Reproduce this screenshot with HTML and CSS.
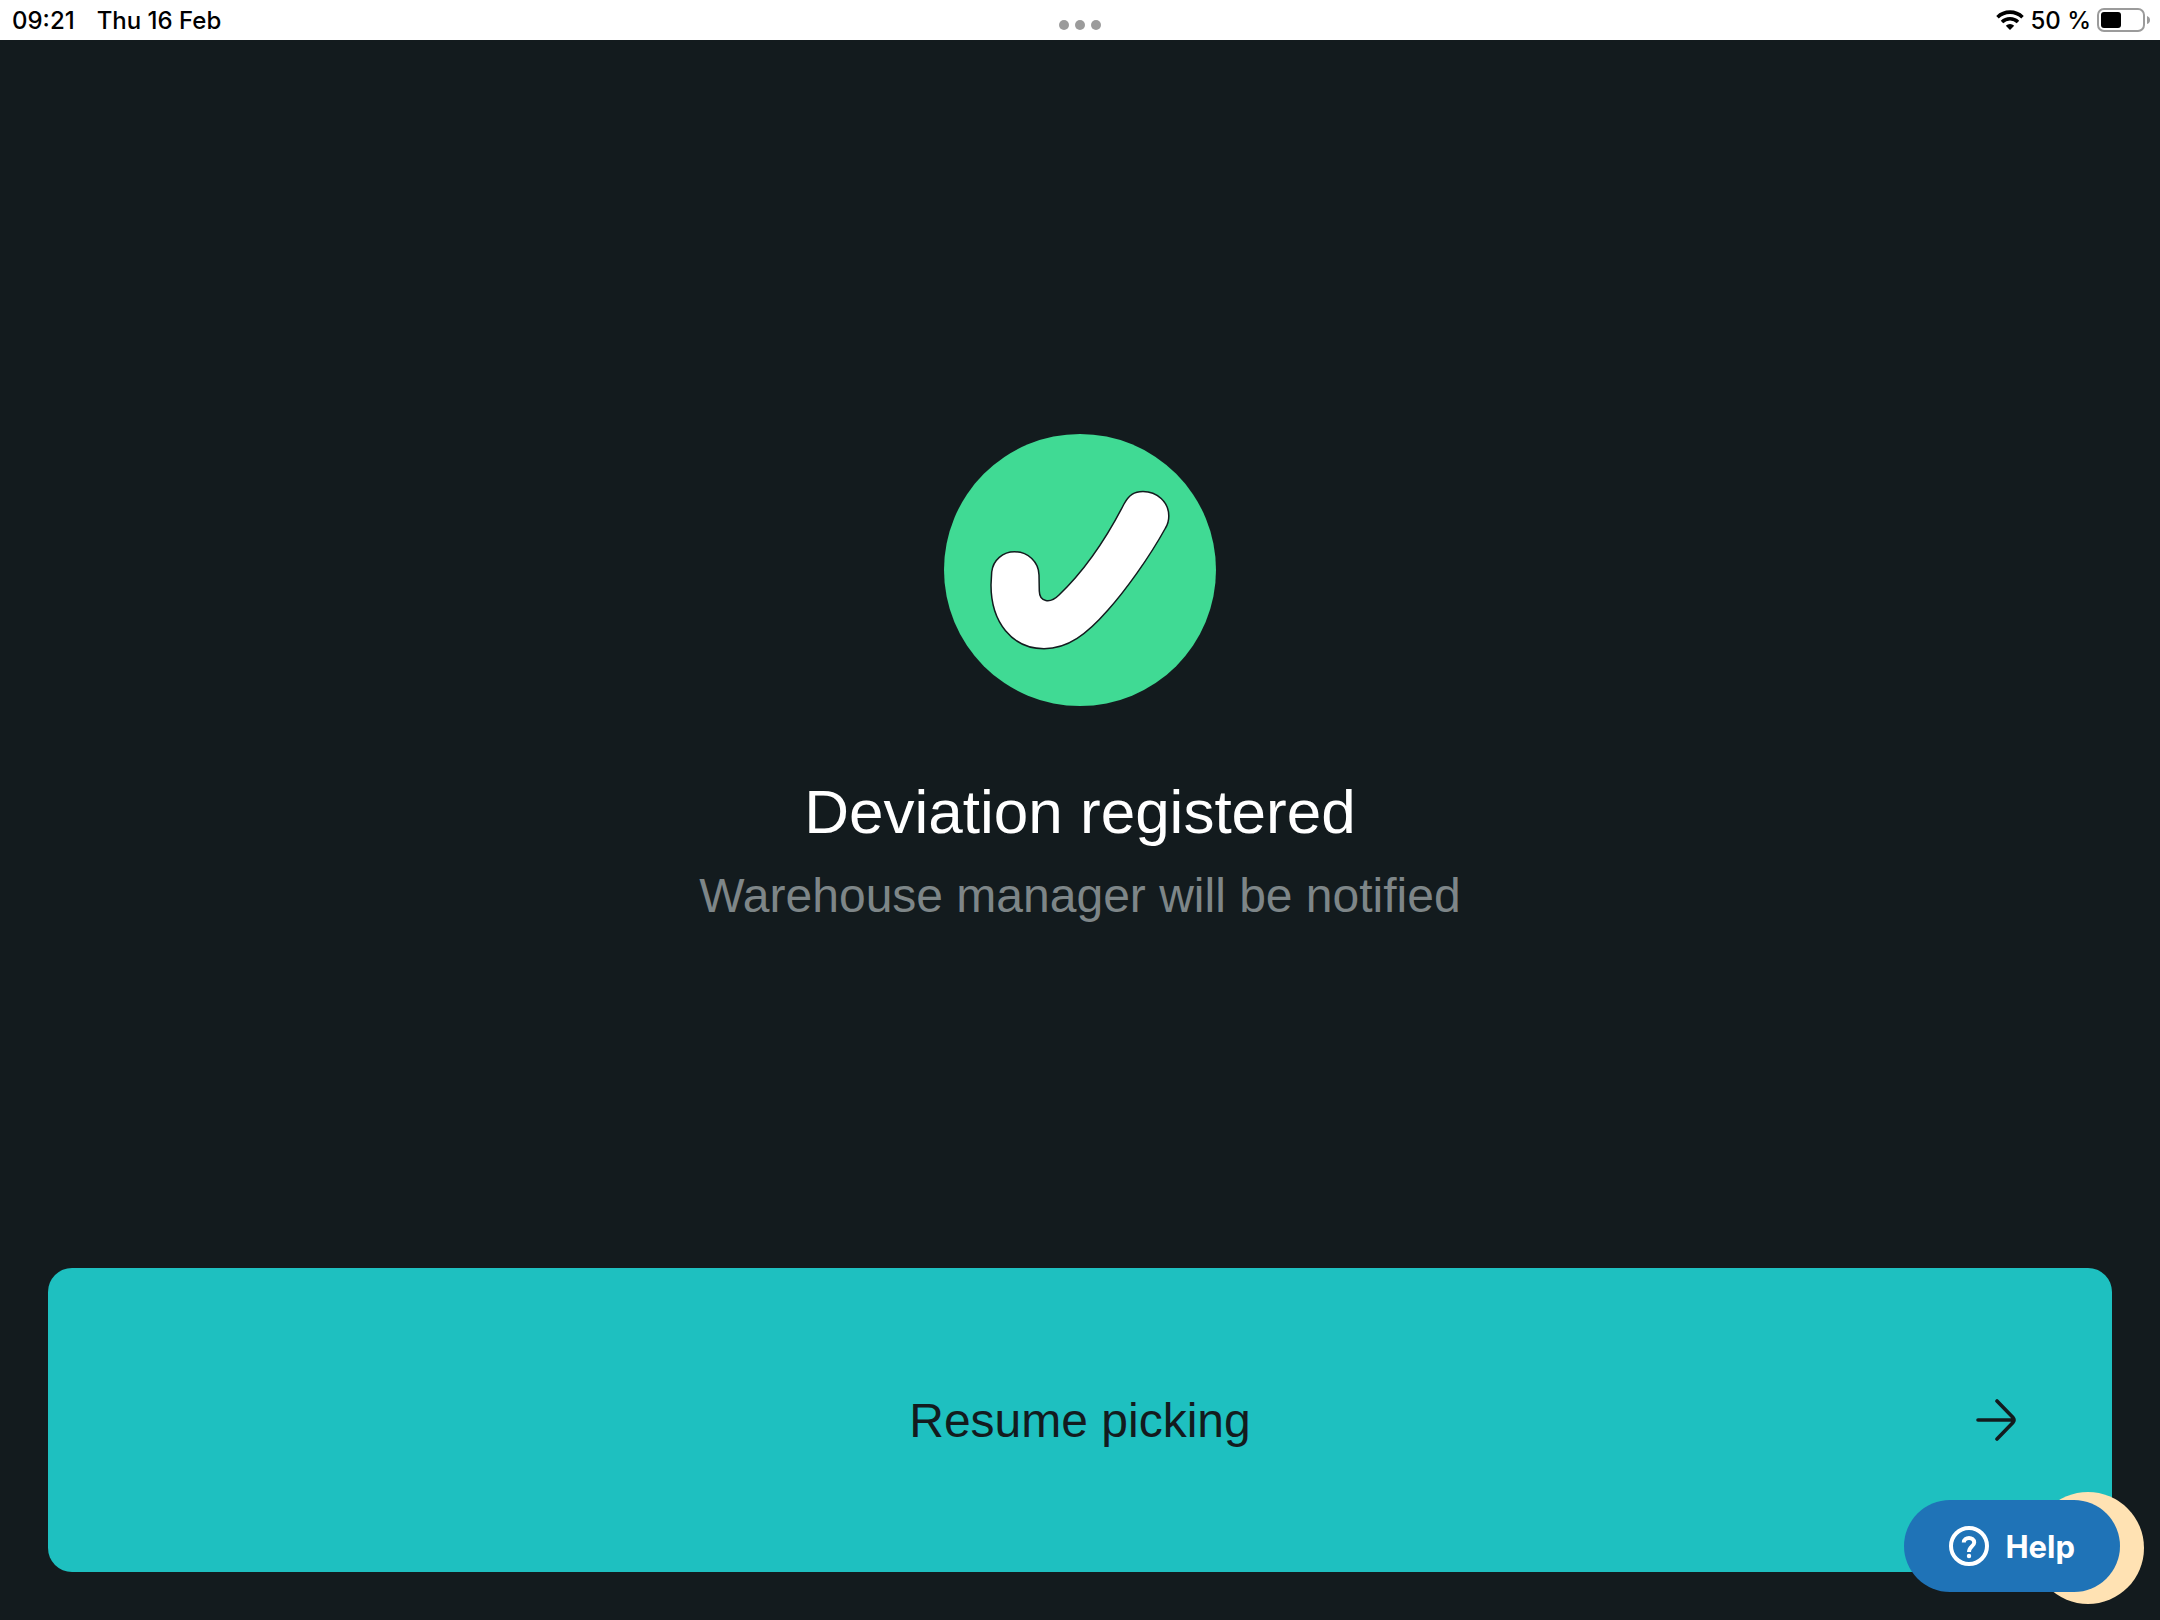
FILE: index.html
```html
<!DOCTYPE html>
<html lang="en">
<head>
  <meta charset="UTF-8" />
  <meta name="viewport" content="width=device-width, initial-scale=1.0" />
  <title>Deviation registered</title>
  <link rel="stylesheet" href="styles.css">
</head>
<body>
  <header class="status-bar">
    <div class="status-left">
      <span>09:21</span>
      <span>Thu 16 Feb</span>
    </div>
    <div class="dots"><i></i><i></i><i></i></div>
    <div class="status-right">
      <svg class="wifi" viewBox="0 0 28 20" fill="none" stroke="#000" stroke-width="3.6">
        <path d="M1.5 7.2 A18 18 0 0 1 26.5 7.2" />
        <path d="M6 12 A11.5 11.5 0 0 1 22 12" />
        <path d="M14 20 L9.8 15.8 A6 6 0 0 1 18.2 15.8 Z" fill="#000" stroke="none" />
      </svg>
      <span>50 %</span>
      <svg class="battery" viewBox="0 0 54 24">
        <rect x="1" y="1" width="46" height="22" rx="6" fill="none" stroke="#9b9b9b" stroke-width="2" />
        <rect x="4" y="4" width="20" height="16" rx="3" />
        <path d="M50 8 Q53 9 53 12 Q53 15 50 16 Z" fill="#9b9b9b" />
      </svg>
    </div>
  </header>

  <main>
    <section class="message">
      <svg class="check" viewBox="0 0 272 272">
        <circle cx="136" cy="136" r="136" fill="#40da94" />
        <path d="M47.7 138 C49 126 59 117.7 70.5 117.7 C84 117.7 94.8 128 95 141 L95.3 157 C95.5 168 106 170 115 161 C138 139 161 107 180 70 C185 61 190 57.5 199 57.5 C213 57.5 224.8 68 224.8 82 C224.8 87 224 90 221.5 94 C205 124 181 157 164 176 C143 200 124 214.7 100 214.7 C68 214.7 47 188 47 151 Z" fill="#fff" stroke="#131b1e" stroke-width="1.5" />
      </svg>
      <h1>Deviation registered</h1>
      <p>Warehouse manager will be notified</p>
    </section>

    <button class="resume" type="button">
      <span>Resume picking</span>
      <svg class="arrow" viewBox="0 0 40 42" fill="none" stroke="#131b1e" stroke-width="3.6" stroke-linecap="round" stroke-linejoin="round">
        <path d="M2 21 H38 M21 2 L37 18.5 Q39 21 37 23.5 L21 40" />
      </svg>
    </button>
  </main>

  <div class="bubble"></div>
  <button class="help" type="button">
    <svg viewBox="0 0 40 40" fill="none" stroke="#fff" stroke-width="4">
      <circle cx="20" cy="20" r="18" />
      <path d="M14.8 16.5 C14.8 10.5 25.2 10.5 25.2 16.5 C25.2 20 20 20.5 20 26" />
      <circle cx="20" cy="30" r="2.2" fill="#fff" stroke="none" />
    </svg>
    <span>Help</span>
  </button>
</body>
</html>
```
FILE: styles.css
```css
* {
  box-sizing: border-box;
}
body {
  margin: 0;
  min-height: 100vh;
  display: flex;
  flex-direction: column;
  background-color: #131b1e;
  font-family: "Liberation Sans", Arial, sans-serif;
}
.status-bar {
  display: grid;
  grid-template-columns: 1fr auto 1fr;
  align-items: center;
  height: 40px;
  padding: 0 9px;
  background-color: #ffffff;
  color: #000000;
  font-family: Inter, sans-serif;
  font-size: 24px;
  font-weight: 500;
}
.status-left {
  display: flex;
  gap: 22px;
  padding-left: 3px;
}
.dots {
  display: flex;
  gap: 6px;
  padding-top: 10px;
}
.dots i {
  width: 10px;
  height: 10px;
  border-radius: 50%;
  background-color: #9b9b9b;
}
.status-right {
  display: flex;
  align-items: center;
  justify-content: flex-end;
  gap: 6px;
}
.wifi {
  width: 28px;
  height: 20px;
}
.battery {
  width: 54px;
  height: 24px;
}
main {
  flex: 1;
  display: flex;
  flex-direction: column;
  padding: 0 48px 48px;
}
.message {
  flex: 1;
  display: flex;
  flex-direction: column;
  align-items: center;
  justify-content: center;
  padding-top: 52px;
  text-align: center;
}
.check {
  width: 272px;
  height: 272px;
  margin-bottom: 68px;
}
h1 {
  margin: 0 0 16px;
  color: #ffffff;
  font-size: 62px;
  font-weight: normal;
  line-height: 76px;
}
.message p {
  margin: 0;
  color: #7e8688;
  font-size: 48px;
  line-height: 60px;
}
.resume {
  display: grid;
  grid-template-columns: 1fr auto 1fr;
  align-items: center;
  height: 304px;
  padding: 0 96px;
  background-color: #1ec0c0;
  color: #131b1e;
  border: none;
  border-radius: 24px;
  font-family: inherit;
  font-size: 48px;
  cursor: pointer;
}
.resume span {
  grid-column: 2;
}
.arrow {
  width: 40px;
  height: 42px;
  justify-self: end;
}
/* floating help */
.bubble {
  position: fixed;
  right: 16px;
  bottom: 16px;
  width: 112px;
  height: 112px;
  border-radius: 50%;
  background-color: #ffe2b3;
}
.help {
  position: fixed;
  right: 40px;
  bottom: 28px;
  display: flex;
  align-items: center;
  gap: 16px;
  height: 92px;
  padding: 0 45px;
  background-color: #1f73b7;
  color: #ffffff;
  border: none;
  border-radius: 46px;
  font-family: Inter, sans-serif;
  font-size: 31px;
  font-weight: 700;
  cursor: pointer;
}
.help svg {
  width: 40px;
  height: 40px;
}
```
